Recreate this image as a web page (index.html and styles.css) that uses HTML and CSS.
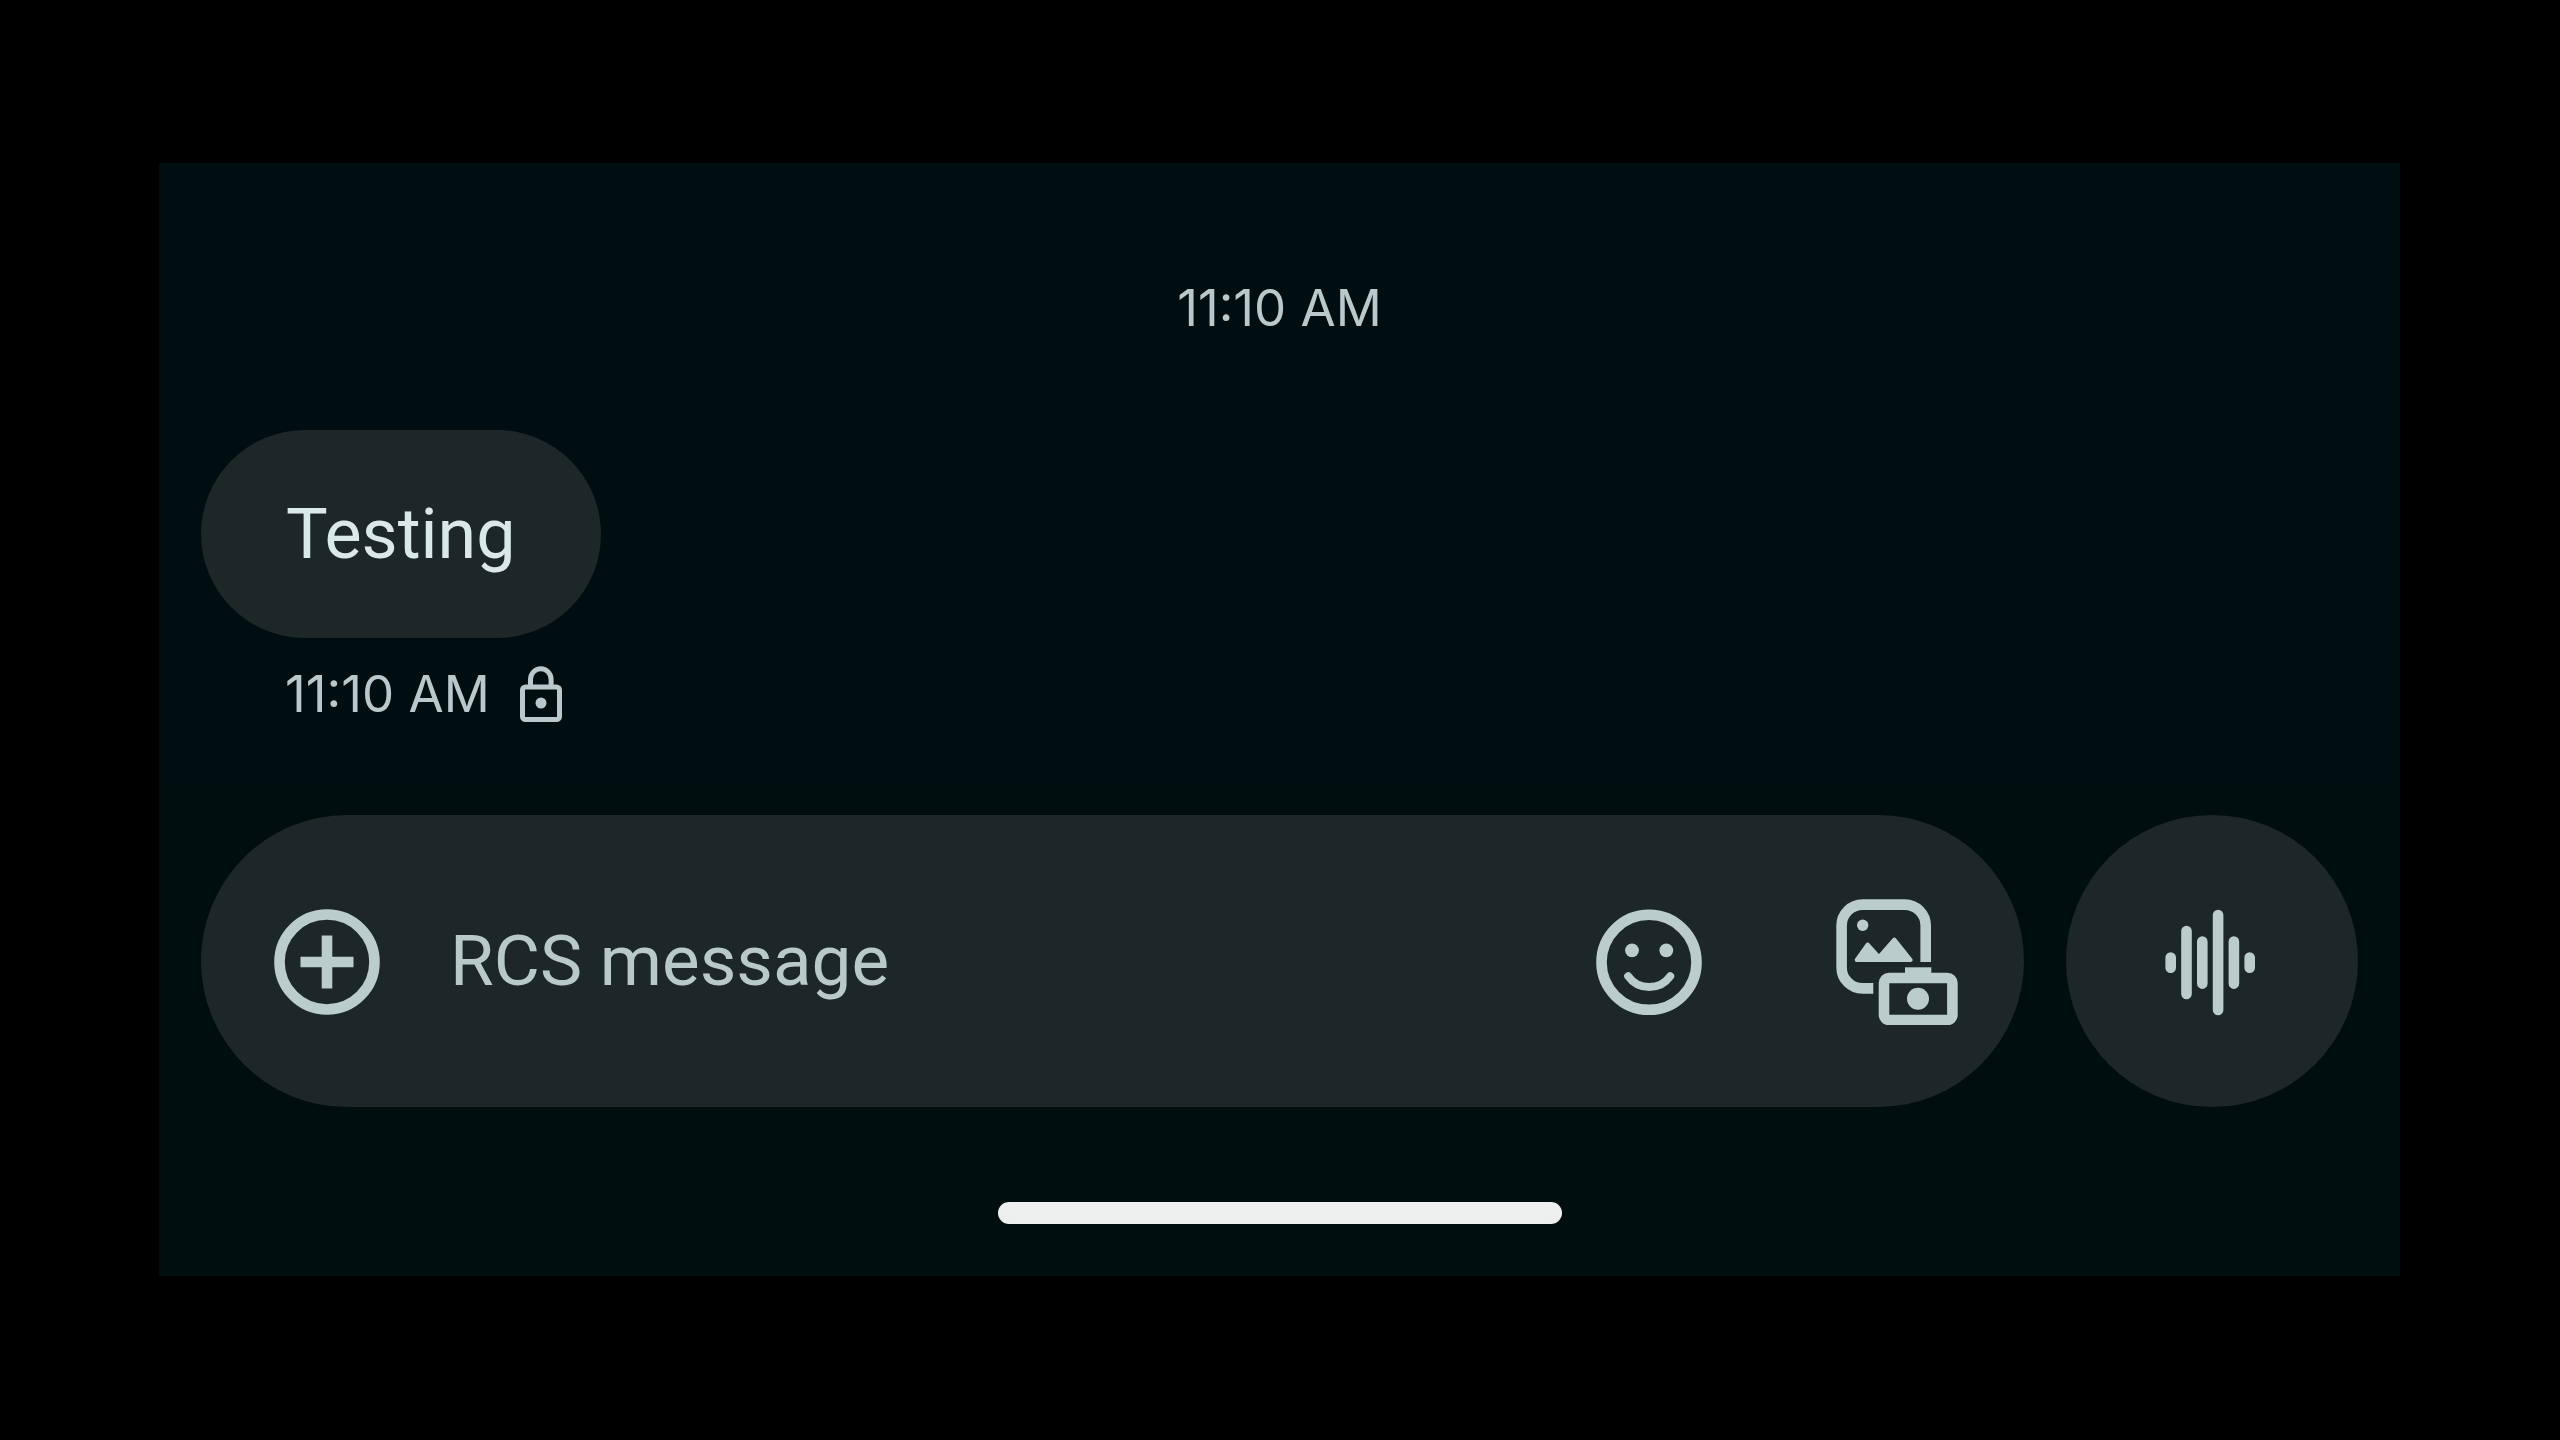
FILE: index.html
```html
<!DOCTYPE html>
<html lang="en">
<head>
<meta charset="utf-8">
<meta name="viewport" content="width=device-width, initial-scale=1">
<title>Messages</title>
<link rel="stylesheet" href="styles.css">
</head>
<body>
<main class="screen">
  <section class="thread" aria-label="Conversation">
    <time class="day-time" datetime="11:10">11:10 AM</time>
    <p class="bubble">Testing</p>
    <div class="status">
      <time datetime="11:10">11:10 AM</time>
      <svg class="lock" viewBox="0 0 42 56" role="img" aria-label="Encrypted">
        <path d="M10.5 20V13.5a10.3 10.8 0 0 1 20.6 0V20" fill="none" stroke="currentColor" stroke-width="5"/>
        <rect x="2.5" y="21" width="37" height="32.5" rx="3" fill="none" stroke="currentColor" stroke-width="5"/>
        <circle cx="21" cy="37" r="5.5" fill="currentColor"/>
      </svg>
    </div>
  </section>

  <form class="composer">
    <div class="field">
      <button class="icon-button" type="button" aria-label="Add attachment">
        <svg class="icon" viewBox="0 0 126 126" fill="none" stroke="currentColor" stroke-width="10.6">
          <circle cx="63" cy="63" r="47.5"/>
          <path d="M63 36.5v53M36.5 63h53"/>
        </svg>
      </button>
      <input class="message" type="text" placeholder="RCS message" aria-label="RCS message">
      <button class="icon-button" type="button" aria-label="Emoji">
        <svg class="icon" viewBox="0 0 126 126" fill="none" stroke="currentColor">
          <circle cx="63" cy="63.3" r="47.5" stroke-width="10.6"/>
          <path d="M42.2 77.3a25.8 25.8 0 0 0 42 0" stroke-width="8" stroke-linecap="round"/>
          <circle cx="46" cy="51.3" r="6.9" fill="currentColor" stroke="none"/>
          <circle cx="80.3" cy="51.3" r="6.9" fill="currentColor" stroke="none"/>
        </svg>
      </button>
      <button class="icon-button gallery" type="button" aria-label="Gallery and camera">
        <svg class="icon" viewBox="0 0 126 126" fill="none" stroke="currentColor" stroke-width="10.6">
          <path d="M39.3 89.4H28.6a21 21 0 0 1-21-21V26.6a21 21 0 0 1 21-21h42.1a21 21 0 0 1 21 21V63"/>
          <circle cx="28.7" cy="26.3" r="5.7" fill="currentColor" stroke="none"/>
          <path d="M22.7 61L33.7 45.5L45 58L60.3 40.5L76.7 61Z" fill="currentColor" stroke-width="4" stroke-linejoin="round"/>
          <rect x="50" y="79" width="68.4" height="42" rx="5"/>
          <path d="M71 68.3h26.3v8H71z" fill="currentColor" stroke="none"/>
          <circle cx="84" cy="99.7" r="11" fill="currentColor" stroke="none"/>
        </svg>
      </button>
    </div>
    <button class="voice" type="button" aria-label="Record voice message">
      <svg class="icon" viewBox="0 0 126 126" fill="none" stroke="currentColor" stroke-width="10.6" stroke-linecap="round">
        <path d="M21.7 59.6v10.2M37.5 33v63M53.3 43.6v42M69.1 17v95M84.9 43.6v42M100.7 59.6v10.2"/>
      </svg>
    </button>
  </form>

  <div class="home-bar"></div>
</main>
</body>
</html>
```
FILE: styles.css
```css
* {
  box-sizing: border-box;
}

body {
  margin: 0;
  padding: 163px 160px 0 159px;
  background: #000;
  font-family: Inter, Roboto, sans-serif;
}

.screen {
  display: flex;
  flex-direction: column;
  padding: 109px 42px 52px;
  background: linear-gradient(#000d11 52%, #010e0f 58%);
  color: #b9c9c9;
}

.thread {
  display: flex;
  flex-direction: column;
  align-items: flex-start;
  font-size: 51px;
  line-height: 72px;
}

.day-time {
  align-self: center;
}

.bubble {
  margin: 86px 0 20px;
  padding: 60px 85px;
  border-radius: 104px;
  background: #1d2728;
  color: #dbe8e8;
  font-family: Roboto, sans-serif;
  font-size: 70px;
  line-height: 88px;
}

.status {
  display: flex;
  align-items: center;
  gap: 30px;
  padding-left: 84px;
}

.lock {
  width: 42px;
  height: 56px;
}

.composer {
  display: flex;
  gap: 42px;
  margin-top: 85px;
}

.field {
  display: flex;
  flex: 1;
  align-items: center;
  min-width: 0;
  height: 292px;
  padding: 2px 64px 0 63px;
  border-radius: 146px;
  background: #1d2728;
}

.icon-button,
.voice {
  flex: none;
  padding: 0;
  border: 0;
  background: none;
  color: #bbcccd;
}

.icon {
  display: block;
  width: 126px;
  height: 126px;
}

.message {
  flex: 1;
  min-width: 0;
  height: 100px;
  margin: 0 60px;
  padding: 0 0 4px;
  border: 0;
  outline: 0;
  background: none;
  color: #dbe8e8;
  font-family: Roboto, sans-serif;
  font-size: 71px;
}

.message::placeholder {
  color: #b9c9c9;
  opacity: 1;
}

.gallery {
  margin-left: 122px;
}

.voice {
  display: grid;
  place-items: center;
  width: 292px;
  height: 292px;
  border-radius: 50%;
  background: #1d2728;
}

.home-bar {
  align-self: center;
  width: 564px;
  height: 22px;
  margin-top: 95px;
  border-radius: 11px;
  background: #edf0ef;
}
```
